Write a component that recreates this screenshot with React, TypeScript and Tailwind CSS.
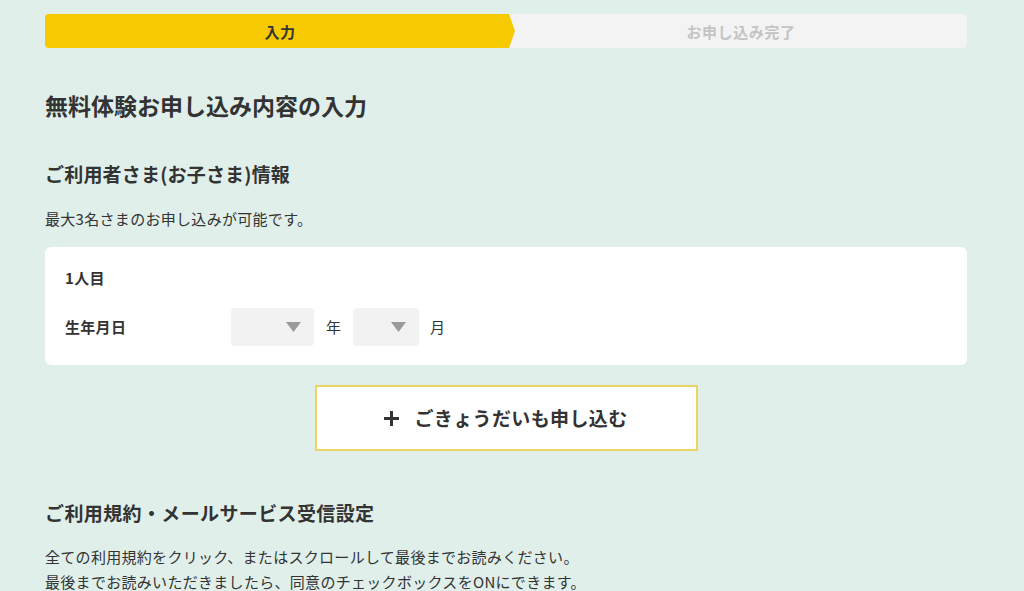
function Select({ width }: { width: string }) {
  return (
    <div className={`flex h-[38px] items-center justify-end rounded bg-[#f2f2f2] pr-[13px] ${width}`}>
      <svg width="15" height="10" viewBox="0 0 15 10">
        <polygon points="0,0 15,0 7.5,10" fill="#9a9a9a" />
      </svg>
    </div>
  );
}

export default function App() {
  return (
    <div className="min-h-[591px] bg-[#e0efea] font-['Noto_Sans_CJK_JP','Noto_Sans',sans-serif] text-[#333]">
      <div className="ml-[45px] w-[922px] pt-[14px] pb-10">
        {/* steps */}
        <div className="flex h-[34px] rounded bg-[#f3f3f3]">
          <div className="flex w-[470px] items-center justify-center rounded-l bg-[#f6c900] text-[15px] font-bold leading-none tracking-[0.04em] text-[#333] [clip-path:polygon(0_0,calc(100%_-_6px)_0,100%_50%,calc(100%_-_6px)_100%,0_100%)]">
            入力
          </div>
          <div className="flex flex-1 items-center justify-center text-[15px] font-bold leading-none tracking-[0.04em] text-[#c4c4c4]">
            お申し込み完了
          </div>
        </div>

        <h1 className="mt-[41px] text-[23px] font-bold leading-[32px]">無料体験お申し込み内容の入力</h1>

        <h2 className="mt-[39px] text-[19px] font-bold leading-[28px] tracking-[0.01em]">ご利用者さま(お子さま)情報</h2>
        <p className="mt-[20px] text-[15px] leading-[22px] tracking-[0.02em]">最大3名さまのお申し込みが可能です。</p>

        <div className="mt-[17px] rounded-md bg-white px-5 pt-[20px] pb-[19px]">
          <p className="text-[15px] font-bold leading-[22px] tracking-[0.02em]">1人目</p>
          <div className="mt-[19px] flex items-center">
            <span className="w-[166px] text-[15px] font-bold tracking-[0.02em]">生年月日</span>
            <Select width="w-[83px]" />
            <span className="mx-[12px] text-[15px]">年</span>
            <Select width="w-[66px]" />
            <span className="ml-[11px] text-[15px]">月</span>
          </div>
        </div>

        <div className="mt-[20px] flex justify-center">
          <button className="box-border flex h-[66px] w-[383px] items-center justify-center gap-[15px] border-2 border-[#ecd462] bg-white text-[19px] font-bold tracking-[0.02em] text-[#333]">
            <svg width="15" height="15" viewBox="0 0 15 15" className="shrink-0">
              <rect x="6" y="0" width="3" height="15" fill="#333" />
              <rect x="0" y="6" width="15" height="3" fill="#333" />
            </svg>
            ごきょうだいも申し込む
          </button>
        </div>

        <h2 className="mt-[48px] text-[19px] font-bold leading-[28px] tracking-[0.02em]">ご利用規約・メールサービス受信設定</h2>
        <p className="mt-[17px] text-[15px] leading-[25px] tracking-[0.02em]">
          全ての利用規約をクリック、またはスクロールして最後までお読みください。
          <br />
          最後までお読みいただきましたら、同意のチェックボックスをONにできます。
        </p>
      </div>
    </div>
  );
}
